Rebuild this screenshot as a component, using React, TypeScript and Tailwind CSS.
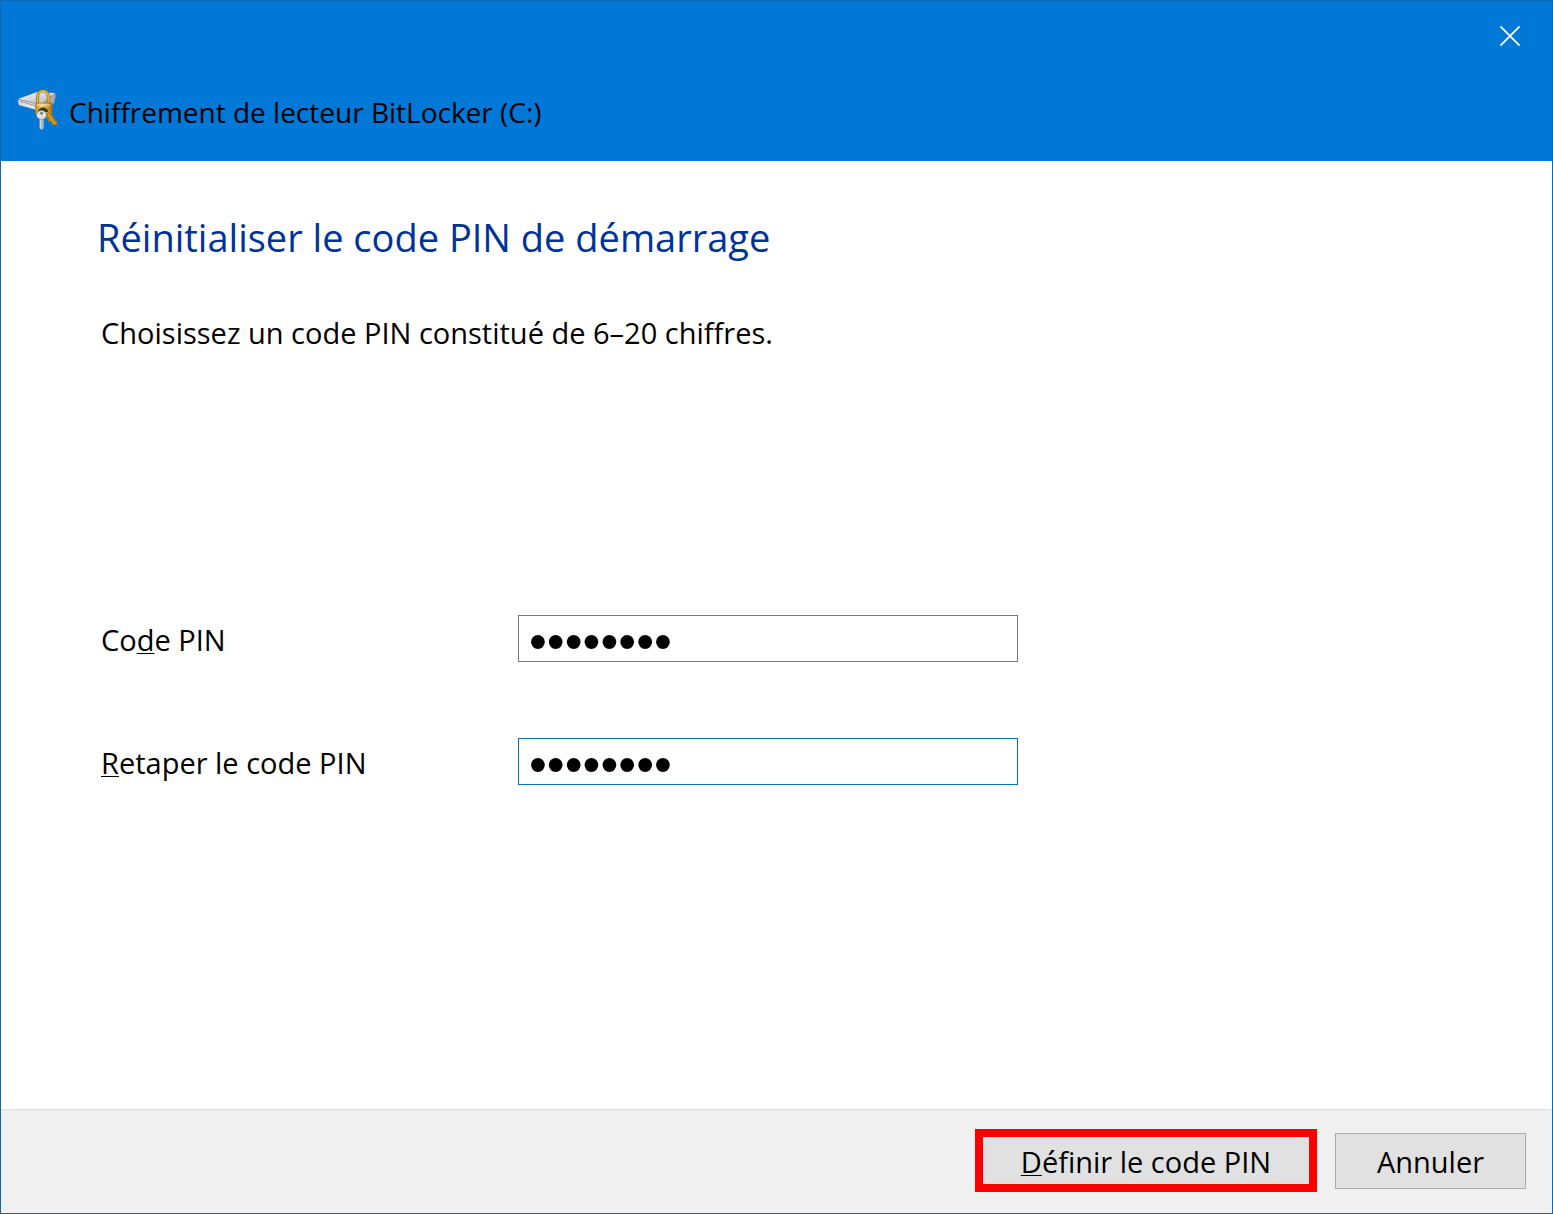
function BitLockerIcon() {
  return (
    <svg viewBox="0 0 44 44" className="size-11 shrink-0" aria-hidden="true">
      <defs>
        <linearGradient id="drive" x1="0" y1="0" x2="1" y2="1">
          <stop offset="0" stopColor="#f4f3f6" />
          <stop offset="1" stopColor="#b9b7bf" />
        </linearGradient>
        <linearGradient id="brass" x1="0" y1="0" x2="1" y2="0">
          <stop offset="0" stopColor="#c58b14" />
          <stop offset="0.4" stopColor="#f3d77c" />
          <stop offset="1" stopColor="#a8700c" />
        </linearGradient>
      </defs>
      {/* drive */}
      <path d="M1 12 L20 4 L38 5 L39 8 L37 16 L22 23 L2 17 Z" fill="#8c8f9c" />
      <path d="M1 11 L20 4 L38 5 L24 16 Z" fill="url(#drive)" />
      <path d="M1 12 L24 17 L24 23 L2 17 Z" fill="#e2e0e6" />
      <path d="M3 13.5 L22 18.5" stroke="#8d8b94" strokeWidth="0.8" />
      <path d="M24 17 L38 6 L37 14 L24 23 Z" fill="#aaa9b3" />
      {/* padlock */}
      <path d="M20.5 17 V10 C20.5 0 31.5 0 31.5 10 V17" fill="none" stroke="#8f6a1b" strokeWidth="3.2" />
      <path d="M20.5 17 V10 C20.5 0.5 31.5 0.5 31.5 10 V17" fill="none" stroke="#d8b34c" strokeWidth="2" />
      <rect x="18.5" y="15" width="16.5" height="11" rx="1" fill="url(#brass)" stroke="#a9761a" strokeWidth="0.6" />
      <path d="M20 17 H33" stroke="#f8e6a5" strokeWidth="1" />
      <path d="M21 24 C21 18 31 18 31 24" fill="#3d3522" />
      {/* brass key */}
      <path d="M28 26 L33 24 L40 34 L40 37 L36 37 L34 34 L32 34 Z" fill="#b87d0c" />
      <path d="M31 26 L38 36" stroke="#e9c35a" strokeWidth="1" />
      {/* steel key */}
      <path d="M22.5 29 L26.5 29 L26.8 39 L25 42 L22.5 40 Z" fill="#d5d9dd" stroke="#7c8790" strokeWidth="0.5" />
      <ellipse cx="24.5" cy="27" rx="5" ry="4.4" fill="#dfe1e2" stroke="#858b90" strokeWidth="0.6" />
      <path d="M22.8 24.4 L26.4 24.4 L24.6 27 Z" fill="#444c52" />
      <path d="M25 31 V40" stroke="#7b858d" strokeWidth="0.8" />
    </svg>
  )
}

// Underlined access key letter
function Key({ children }: { children: string }) {
  return <u className="decoration-1 underline-offset-2">{children}</u>
}

function PinField({ id, label, accessKey, borderClass }: {
  id: string
  label: React.ReactNode
  accessKey: string
  borderClass: string
}) {
  return (
    <div className="flex items-center">
      <label htmlFor={id} className="w-[417px] shrink-0 pt-0.5">{label}</label>
      <input
        id={id}
        type="password"
        accessKey={accessKey}
        defaultValue="27415890"
        className={`h-[47px] w-[500px] border bg-white px-2.5 pt-1.5 font-['Liberation_Sans',sans-serif] text-[51px] outline-none ${borderClass}`}
      />
    </div>
  )
}

export default function App() {
  return (
    <div className="flex min-h-screen flex-col border border-[#0f68ad] bg-white font-['Open_Sans',sans-serif] text-[29px] leading-10 text-black">
      {/* Title bar */}
      <header className="bg-[#0078d7] pb-6">
        <div className="flex justify-end">
          <button aria-label="Fermer" className="flex h-[70px] w-[84px] items-center justify-center">
            <svg viewBox="0 0 20 20" className="size-5" aria-hidden="true">
              <path d="M0.5 0.5 L19.5 19.5 M19.5 0.5 L0.5 19.5" stroke="#fff" strokeWidth="1.8" />
            </svg>
          </button>
        </div>
        <div className="flex h-[66px] items-center gap-2 px-4 pt-3">
          <BitLockerIcon />
          <h1 className="pt-1 text-[28px]">Chiffrement de lecteur BitLocker (C:)</h1>
        </div>
      </header>

      <main className="flex-1 pt-[50px] pl-24">
        <h2 className="text-[38px] leading-[52px] text-[#003399]">Réinitialiser le code PIN de démarrage</h2>
        <div className="pl-1">
          <p className="mt-[50px]">Choisissez un code PIN constitué de 6–20 chiffres.</p>
          <form className="mt-[262px] flex flex-col gap-[76px]">
            <PinField id="pin" accessKey="d" label={<>Co<Key>d</Key>e PIN</>} borderClass="border-[#7a7a7a]" />
            <PinField id="pin-confirm" accessKey="r" label={<><Key>R</Key>etaper le code PIN</>} borderClass="border-[#0f72b8]" />
          </form>
        </div>
      </main>

      {/* Actions */}
      <footer className="flex items-center justify-end gap-[18px] border-t border-[#dfdfdf] bg-[#f0f0f0] pt-[19px] pr-[26px] pb-[21px]">
        <button accessKey="d" className="h-[63px] w-[342px] border-8 border-[#ff0000] bg-[#e1e1e1] pt-0.5">
          <Key>D</Key>éfinir le code PIN
        </button>
        <button className="h-14 w-[191px] border border-[#adadad] bg-[#e1e1e1] pt-0.5">Annuler</button>
      </footer>
    </div>
  )
}
